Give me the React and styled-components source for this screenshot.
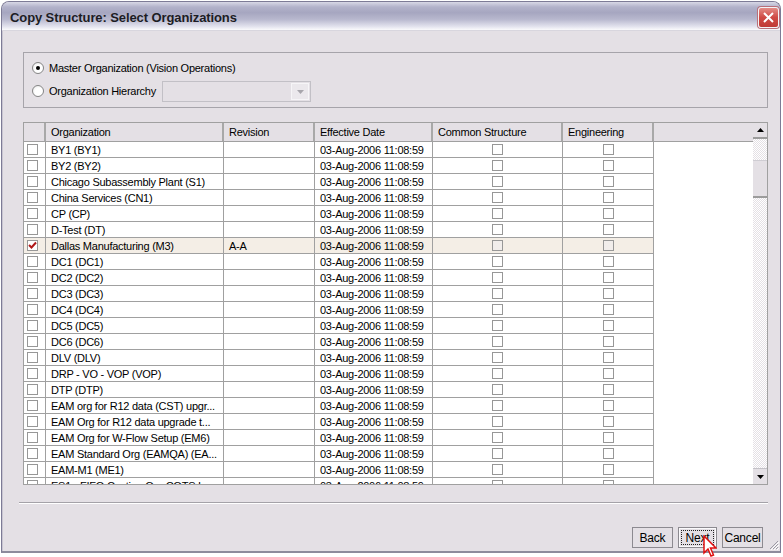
import React from 'react';
import styled, { createGlobalStyle } from 'styled-components';

const Global = createGlobalStyle`
  html, body { margin: 0; padding: 0; background: #ffffff; }
  body {
    font-family: "Liberation Sans", Arial, sans-serif;
    font-size: 11px;
    color: #000;
  }
  #root { width: 783px; height: 557px; overflow: hidden; position: relative; }
`;

const BG = '#e4e0e5';
const LINE = '#a0a0a0';

const Window = styled.div`
  position: relative;
  margin: 1px 0 0 1px;
  width: 780px;
  height: 552px;
  box-sizing: border-box;
  border: 1px solid #7d7b96;
  border-bottom: 2px solid #8d8b9c;
  border-radius: 8px 8px 0 0;
  background: ${BG};
  display: flex;
  flex-direction: column;
  overflow: hidden;
`;

const TitleBar = styled.div`
  height: 28px;
  flex: none;
  display: flex;
  align-items: center;
  justify-content: space-between;
  padding: 0 1px 0 8px;
  background: linear-gradient(#d8d8e6 0%, #b2b2ca 18%, #a6a6c0 38%, #b8b8ce 62%, #e0e0ec 86%, #fafafc 100%);
  border-bottom: 1px solid #d8d6de;
`;

const Title = styled.div`
  font-family: "Liberation Sans", Arial, sans-serif;
  font-weight: bold;
  font-size: 13px;
  color: #1c1c24;
  padding-top: 2px;
  letter-spacing: -0.1px;
`;

const CloseBtn = styled.div`
  width: 21px;
  height: 21px;
  box-sizing: border-box;
  border-radius: 3px;
  border: 1px solid #f3f3f6;
  background: linear-gradient(#e48c86, #cf4a44 50%, #c03a36);
  box-shadow: 0 0 0 1px #b8707a;
  display: flex;
  align-items: center;
  justify-content: center;
  margin-top: 2px;
`;

const Body = styled.div`
  flex: 1;
  display: flex;
  flex-direction: column;
  padding: 21px 12px 0 20px;
  border-left: 1px solid #c9c6d2;
`;

const GroupBox = styled.div`
  height: 56px;
  box-sizing: border-box;
  border: 1px solid #a6a4aa;
  padding: 3px 8px 5px;
  display: flex;
  flex-direction: column;
`;

const RadioRow = styled.div`
  height: 23px;
  display: flex;
  align-items: center;
`;

const Radio = styled.span`
  width: 12px;
  height: 12px;
  box-sizing: border-box;
  border-radius: 50%;
  border: 1px solid #858585;
  background: radial-gradient(circle at 60% 60%, #ffffff 45%, #e2e2e2 100%);
  display: flex;
  align-items: center;
  justify-content: center;
  flex: none;
  &::after {
    content: '';
    width: 4px;
    height: 4px;
    border-radius: 50%;
    background: ${p => (p.$on ? '#000' : 'transparent')};
  }
`;

const Label = styled.span`
  margin-left: 5px;
  letter-spacing: -0.25px;
  white-space: nowrap;
`;

const Combo = styled.div`
  margin-left: 6px;
  margin-top: 2px;
  width: 149px;
  height: 21px;
  box-sizing: border-box;
  border: 1px solid #c2c0c6;
  background: ${BG};
  display: flex;
  justify-content: flex-end;
  padding: 1px;
`;

const ComboBtn = styled.div`
  width: 18px;
  background: #ebe8ec;
  border: 1px solid #f6f5f7;
  box-sizing: border-box;
  display: flex;
  align-items: center;
  justify-content: center;
`;

const Table = styled.div`
  margin-top: 14px;
  height: 363px;
  box-sizing: border-box;
  border: 1px solid ${LINE};
  background: #fff;
  display: flex;
`;

const Main = styled.div`
  flex: 1;
  display: flex;
  flex-direction: column;
  overflow: hidden;
`;

const COLS = '22px 178px 91px 118px 130px 91px';

const HeaderRow = styled.div`
  height: 19px;
  flex: none;
  box-sizing: border-box;
  display: grid;
  grid-template-columns: ${COLS} 1fr;
  background: ${BG};
  border-bottom: 1px solid ${LINE};
`;

const HeadCell = styled.div`
  box-sizing: border-box;
  border-right: ${p => (p.$last ? 'none' : `2px solid #a8a8a8`)};
  padding-left: 5px;
  display: flex;
  align-items: center;
  white-space: nowrap;
  letter-spacing: -0.25px;
`;

const Row = styled.div`
  width: 630px;
  height: 16px;
  flex: none;
  box-sizing: border-box;
  display: grid;
  grid-template-columns: ${COLS};
  border-bottom: 1px solid ${LINE};
  background: ${p => (p.$sel ? '#f4eee6' : '#fff')};
`;

const Cell = styled.div`
  box-sizing: border-box;
  border-right: 1px solid ${LINE};
  padding-left: ${p => (p.$center ? 0 : '5px')};
  display: flex;
  align-items: center;
  justify-content: ${p => (p.$center ? 'center' : 'flex-start')};
  white-space: nowrap;
  overflow: hidden;
  letter-spacing: -0.25px;
`;

const CheckCell = styled(Cell)`
  padding-left: 3px;
`;

const Box = styled.span`
  width: 11px;
  height: 11px;
  box-sizing: border-box;
  border: 1px solid #979797;
  background: ${p => (p.$dim ? '#f1edeb' : '#fff')};
  display: flex;
  align-items: center;
  justify-content: center;
  flex: none;
`;

const ScrollBar = styled.div`
  width: 14px;
  flex: none;
  display: flex;
  flex-direction: column;
  background: ${BG};
`;

const ScrollBtn = styled.div`
  height: 16px;
  flex: none;
  box-sizing: border-box;
  background: ${BG};
  border-bottom: ${p => (p.$up ? '2px solid #9c9c9c' : 'none')};
  border-top: ${p => (p.$up ? 'none' : '1px solid #c4c2c8')};
  display: flex;
  align-items: center;
  justify-content: center;
`;

const Track = styled.div`
  flex: ${p => (p.$grow ? 1 : 'none')};
  height: ${p => (p.$grow ? 'auto' : `${p.$h}px`)};
  background: repeating-conic-gradient(#ffffff 0 25%, #e4e0e5 0 50%) 0 0 / 2px 2px;
`;

const Thumb = styled.div`
  height: 38px;
  flex: none;
  box-sizing: border-box;
  background: ${BG};
  border-top: 1px solid #cfcdd3;
  border-bottom: 2px solid #9c9c9c;
`;

const Separator = styled.div`
  margin: 17px 0 0 -4px;
  height: 0;
  border-top: 1px solid #a4a2a8;
  border-bottom: 1px solid #ffffff;
`;

const Footer = styled.div`
  margin-top: 23px;
  display: flex;
  justify-content: flex-end;
  gap: 5px;
  padding-right: 5px;
`;

const Button = styled.div`
  width: ${p => p.$w}px;
  height: 21px;
  box-sizing: border-box;
  border: 1px solid #8c8a90;
  background: ${BG};
  display: flex;
  align-items: center;
  justify-content: center;
  font-size: 12px;
  letter-spacing: -0.2px;
  box-shadow: ${p => (p.$focus ? 'inset 0 0 0 1px #fbfafc' : 'none')};
  position: relative;
  ${p =>
    p.$focus &&
    `&::before {
      content: '';
      position: absolute;
      inset: 2px;
      border: 1px dotted #222;
    }`}
`;

const Grip = styled.svg`
  position: absolute;
  right: 1px;
  bottom: 1px;
`;

const Cursor = styled.svg`
  position: absolute;
  left: 703px;
  top: 535px;
`;

const rows = [
  ['BY1 (BY1)', ''],
  ['BY2 (BY2)', ''],
  ['Chicago Subassembly Plant (S1)', ''],
  ['China Services (CN1)', ''],
  ['CP (CP)', ''],
  ['D-Test (DT)', ''],
  ['Dallas Manufacturing (M3)', 'A-A', true],
  ['DC1 (DC1)', ''],
  ['DC2 (DC2)', ''],
  ['DC3 (DC3)', ''],
  ['DC4 (DC4)', ''],
  ['DC5 (DC5)', ''],
  ['DC6 (DC6)', ''],
  ['DLV (DLV)', ''],
  ['DRP - VO - VOP (VOP)', ''],
  ['DTP (DTP)', ''],
  ['EAM org for R12 data (CST) upgr...', ''],
  ['EAM Org for R12 data upgrade t...', ''],
  ['EAM Org for W-Flow Setup (EM6)', ''],
  ['EAM Standard Org (EAMQA) (EA...', ''],
  ['EAM-M1 (ME1)', ''],
  ['ES1 - FIFO Costing Org COTS I...', ''],
];

const Tri = ({ down, color = '#000' }) => (
  <svg width="7" height="4" viewBox="0 0 7 4">
    <polygon points={down ? '0,0 7,0 3.5,4' : '0,4 7,4 3.5,0'} fill={color} />
  </svg>
);

const Check = () => (
  <svg width="9" height="9" viewBox="0 0 9 9">
    <path d="M1 4 L3.5 6.5 L8 1.5" stroke="#b01818" strokeWidth="2" fill="none" />
  </svg>
);

export default function App() {
  return (
    <>
      <Global />
      <Window>
        <TitleBar>
          <Title>Copy Structure: Select Organizations</Title>
          <CloseBtn>
            <svg width="11" height="11" viewBox="0 0 11 11">
              <path d="M1 1 L10 10 M10 1 L1 10" stroke="#fff" strokeWidth="2" />
            </svg>
          </CloseBtn>
        </TitleBar>
        <Body>
          <GroupBox>
            <RadioRow>
              <Radio $on />
              <Label>Master Organization (Vision Operations)</Label>
            </RadioRow>
            <RadioRow>
              <Radio />
              <Label>Organization Hierarchy</Label>
              <Combo>
                <ComboBtn>
                  <Tri down color="#a8a6ac" />
                </ComboBtn>
              </Combo>
            </RadioRow>
          </GroupBox>
          <Table>
            <Main>
              <HeaderRow>
                <HeadCell />
                <HeadCell>Organization</HeadCell>
                <HeadCell>Revision</HeadCell>
                <HeadCell>Effective Date</HeadCell>
                <HeadCell>Common Structure</HeadCell>
                <HeadCell>Engineering</HeadCell>
                <HeadCell $last />
              </HeaderRow>
              {rows.map(([name, rev, sel]) => (
                <Row key={name} $sel={sel}>
                  <CheckCell>
                    <Box>{sel && <Check />}</Box>
                  </CheckCell>
                  <Cell>{name}</Cell>
                  <Cell>{rev}</Cell>
                  <Cell>03-Aug-2006 11:08:59</Cell>
                  <Cell $center>
                    <Box $dim={sel} />
                  </Cell>
                  <Cell $center>
                    <Box $dim={sel} />
                  </Cell>
                </Row>
              ))}
            </Main>
            <ScrollBar>
              <ScrollBtn $up>
                <Tri />
              </ScrollBtn>
              <Track $h={21} />
              <Thumb />
              <Track $grow />
              <ScrollBtn>
                <Tri down />
              </ScrollBtn>
            </ScrollBar>
          </Table>
          <Separator />
          <Footer>
            <Button $w={41}>Back</Button>
            <Button $w={39} $focus>Next</Button>
            <Button $w={41}>Cancel</Button>
          </Footer>
        </Body>
        <Grip width="10" height="10" viewBox="0 0 10 10">
          <path d="M9 1 L1 9 M9 4 L4 9 M9 7 L7 9" stroke="#9c9aa4" strokeWidth="1" />
          <path d="M10 2 L2 10 M10 5 L5 10 M10 8 L8 10" stroke="#ffffff" strokeWidth="1" />
        </Grip>
      </Window>
      <Cursor width="14" height="23" viewBox="0 0 14 23">
        <path
          d="M1 1 L1 18 L5 14 L8 21 L10.5 20 L7.5 13 L13 13 Z"
          fill="#fff"
          stroke="#e01010"
          strokeWidth="1.5"
          strokeLinejoin="miter"
        />
      </Cursor>
    </>
  );
}
